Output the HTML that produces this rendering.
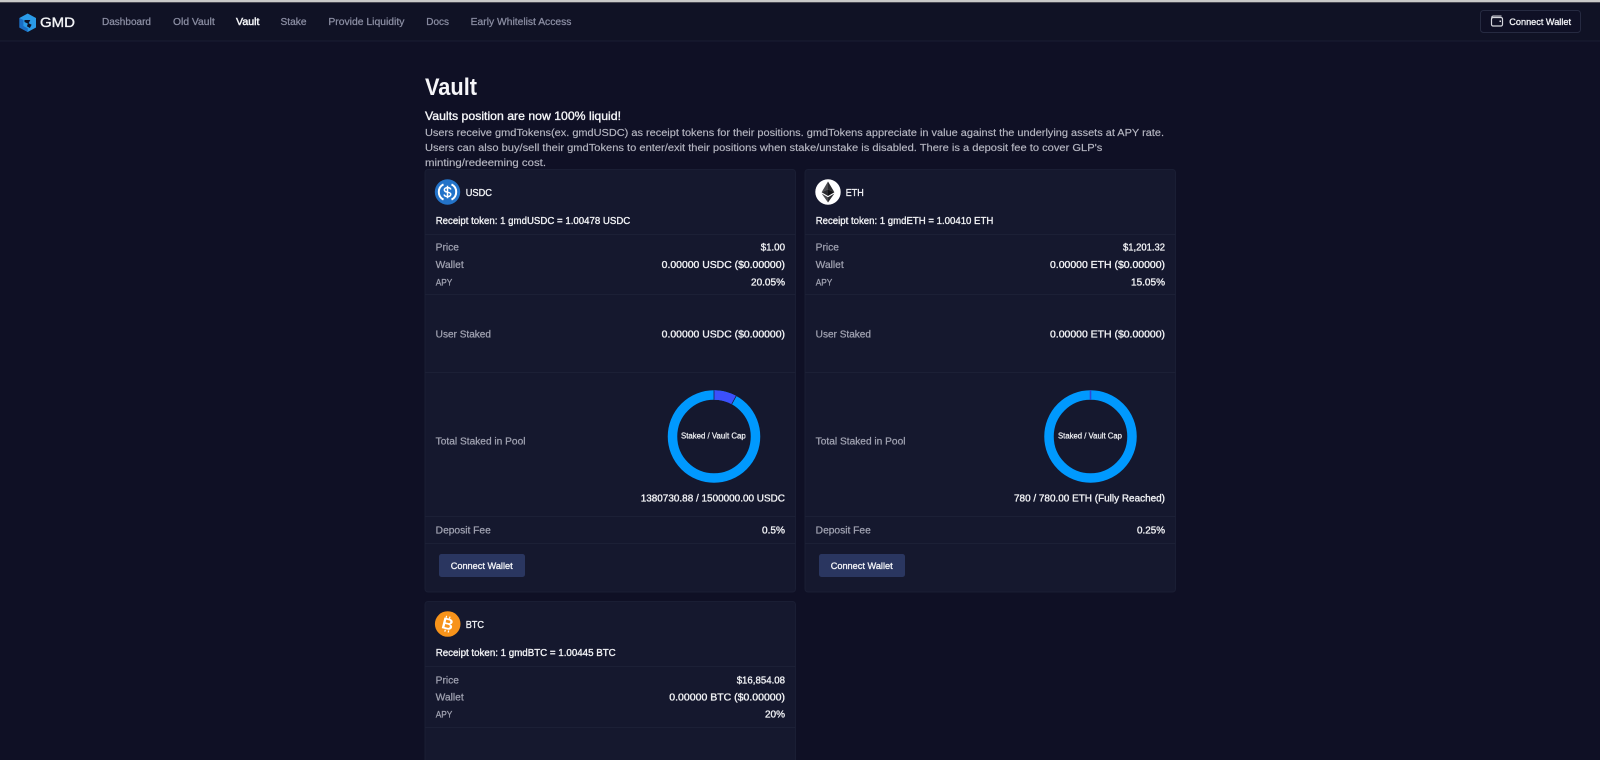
<!DOCTYPE html>
<html><head><meta charset="utf-8"><title>Vault</title>
<style>
html,body{margin:0;padding:0;width:1600px;height:760px;overflow:hidden;background:#0f1025}
svg{display:block;position:absolute;left:0;top:0;filter:blur(.3px)}
text{font-family:"Liberation Sans",sans-serif;font-size:10px}
.n{fill:#8b8ea3;stroke:#8b8ea3;stroke-width:.25}
.w{fill:#f2f3f6;stroke:#f2f3f6;stroke-width:.32}
.l{fill:#a0a2b1;stroke:#a0a2b1;stroke-width:.25}
.p{fill:#b6b7c2;stroke:#b6b7c2;stroke-width:.15}
.a{font-size:9.400px}
.line{stroke:#1c2036;stroke-width:1}
.card{fill:#15182e;stroke:#1a1e34;stroke-width:1}
</style></head><body>
<svg width="1600" height="760" viewBox="0 0 1600 760" xmlns="http://www.w3.org/2000/svg">
<rect width="1600" height="760" fill="#0f1025"/>
<rect width="1600" height="41" fill="#101225"/>
<rect width="1600" height="2" fill="#c9c9c9"/>
<rect y="2" width="1600" height="1" fill="#4a4a55"/>
<line x1="0" x2="1600" y1="41" y2="41" stroke="#1a1d33"/>

<!-- logo -->
<path d="M27.700 13.500 36 18v9.500l-8.300 4.500-8.300-4.500V18z" fill="#2a9be8"/>
<path d="M19.400 18l4 2v6l4.300 2.300v3.700l-8.300-4.500z" fill="#1a6cc4"/>
<path d="M24.500 20h5.800l-1.700 3.200 3 1.500-1.700 3.300-3-1.800 1-2.600-3.400-1.600z" fill="#0f1025"/>
<text x="40" y="27" class="w" style="font-size:14px;stroke-width:.35" textLength="35" lengthAdjust="spacingAndGlyphs">GMD</text>

<!-- nav -->
<text x="102" y="25" class="n" textLength="49" lengthAdjust="spacingAndGlyphs">Dashboard</text>
<text x="173" y="25" class="n" textLength="41.700" lengthAdjust="spacingAndGlyphs">Old Vault</text>
<text x="236" y="25" class="w" style="stroke-width:.45" textLength="23.500" lengthAdjust="spacingAndGlyphs">Vault</text>
<text x="280.500" y="25" class="n" textLength="26" lengthAdjust="spacingAndGlyphs">Stake</text>
<text x="328.400" y="25" class="n" textLength="76" lengthAdjust="spacingAndGlyphs">Provide Liquidity</text>
<text x="426.300" y="25" class="n" textLength="22.700" lengthAdjust="spacingAndGlyphs">Docs</text>
<text x="470.700" y="25" class="n" textLength="100.700" lengthAdjust="spacingAndGlyphs">Early Whitelist Access</text>

<!-- connect wallet -->
<rect x="1480.500" y="10.500" width="100" height="22" rx="3" fill="#0f1025" stroke="#262a41"/>
<path d="M1493 16h8.500M1491.700 19v-1.300q0-1.700 1.700-1.700" fill="none" stroke="#d4d5dc" stroke-width="1"/>
<rect x="1491.500" y="17.500" width="11" height="8.500" rx="1.500" fill="none" stroke="#d4d5dc" stroke-width="1.200"/>
<rect x="1499.500" y="20.500" width="1.500" height="1.500" fill="#d4d5dc"/>
<text x="1509.300" y="25" class="w" style="font-size:9.500px" textLength="61.700" lengthAdjust="spacingAndGlyphs">Connect Wallet</text>

<!-- header -->
<text x="425" y="95" style="font-size:24px;font-weight:700;fill:#f6f6f9" textLength="52" lengthAdjust="spacingAndGlyphs">Vault</text>
<text x="425" y="120" style="font-size:12px;fill:#f4f5f8;stroke:#f4f5f8;stroke-width:.35" textLength="196" lengthAdjust="spacingAndGlyphs">Vaults position are now 100% liquid!</text>
<text x="425" y="136" class="p" textLength="739" lengthAdjust="spacingAndGlyphs">Users receive gmdTokens(ex. gmdUSDC) as receipt tokens for their positions. gmdTokens appreciate in value against the underlying assets at APY rate.</text>
<text x="425" y="151" class="p" textLength="677.300" lengthAdjust="spacingAndGlyphs">Users can also buy/sell their gmdTokens to enter/exit their positions when stake/unstake is disabled. There is a deposit fee to cover GLP's</text>
<text x="425" y="166" class="p" textLength="121" lengthAdjust="spacingAndGlyphs">minting/redeeming cost.</text>

<!-- CARD USDC -->
<rect class="card" x="425" y="169.500" width="370.500" height="422.500" rx="3"/>
<circle cx="447.500" cy="192" r="12.700" fill="#2373c9"/>
<path d="M443.500 184.400a8.500 8.500 0 0 0 0 15.200M451.500 184.400a8.500 8.500 0 0 1 0 15.200" fill="none" stroke="#fff" stroke-width="2"/>
<path d="M450.800 189.500c-.3-1.300-1.700-1.900-3.300-1.900-1.900 0-3.200.9-3.200 2.300 0 3.200 6.500 1.400 6.500 4.400 0 1.400-1.400 2.300-3.300 2.300-1.800 0-3.100-.7-3.400-2.100M447.500 185.700v12.600" fill="none" stroke="#fff" stroke-width="1.500"/>
<text x="465.700" y="196" class="w" textLength="26.300" lengthAdjust="spacingAndGlyphs">USDC</text>
<text x="435.700" y="224" class="w" textLength="194.600" lengthAdjust="spacingAndGlyphs">Receipt token: 1 gmdUSDC = 1.00478 USDC</text>
<line class="line" x1="425" x2="795.500" y1="234.500" y2="234.500"/>
<text x="435.700" y="250.700" class="l" textLength="23.300" lengthAdjust="spacingAndGlyphs">Price</text>
<text x="760.700" y="250.700" class="w" textLength="24.300" lengthAdjust="spacingAndGlyphs">$1.00</text>
<text x="435.700" y="268" class="l" textLength="28" lengthAdjust="spacingAndGlyphs">Wallet</text>
<text x="661.700" y="268" class="w" textLength="123.300" lengthAdjust="spacingAndGlyphs">0.00000 USDC ($0.00000)</text>
<text x="435.700" y="285.700" class="l a" textLength="16.600" lengthAdjust="spacingAndGlyphs">APY</text>
<text x="751" y="285.700" class="w" textLength="34" lengthAdjust="spacingAndGlyphs">20.05%</text>
<line class="line" x1="425" x2="795.500" y1="294.500" y2="294.500"/>
<text x="435.700" y="337.400" class="l" textLength="55.300" lengthAdjust="spacingAndGlyphs">User Staked</text>
<text x="661.700" y="337.400" class="w" textLength="123.300" lengthAdjust="spacingAndGlyphs">0.00000 USDC ($0.00000)</text>
<line class="line" x1="425" x2="795.500" y1="372.500" y2="372.500"/>
<text x="435.700" y="444.700" class="l" textLength="89.800" lengthAdjust="spacingAndGlyphs">Total Staked in Pool</text>
<circle cx="714" cy="436.500" r="41.500" fill="none" stroke="#0099fe" stroke-width="9.500"/>
<path d="M714 395a41.500 41.500 0 0 1 19.900 5.100" fill="none" stroke="#3c50fb" stroke-width="9.500"/>
<path d="M714 390.200v9.500M736.200 395.900l-4.500 8.300" stroke="#15182e" stroke-width=".7"/>
<text x="681" y="438.300" class="w" style="font-size:8px;stroke-width:.22" textLength="64.700" lengthAdjust="spacingAndGlyphs">Staked / Vault Cap</text>
<text x="640.700" y="501.700" class="w" textLength="144.300" lengthAdjust="spacingAndGlyphs">1380730.88 / 1500000.00 USDC</text>
<line class="line" x1="425" x2="795.500" y1="516.500" y2="516.500"/>
<text x="435.700" y="533.700" class="l" textLength="55.100" lengthAdjust="spacingAndGlyphs">Deposit Fee</text>
<text x="762" y="533.700" class="w" textLength="23" lengthAdjust="spacingAndGlyphs">0.5%</text>
<line class="line" x1="425" x2="795.500" y1="543.500" y2="543.500"/>
<rect x="439" y="554" width="86" height="23" rx="2.500" fill="#2a3660"/>
<text x="450.700" y="569" class="w" style="font-size:9.500px" textLength="62" lengthAdjust="spacingAndGlyphs">Connect Wallet</text>

<!-- CARD ETH -->
<rect class="card" x="805" y="169.500" width="370.500" height="422.500" rx="3"/>
<circle cx="828" cy="192" r="12.700" fill="#fff"/>
<path d="M828 181.500l-6.400 10.700 6.400-2.800z" fill="#4b4b4f"/>
<path d="M828 181.500l6.400 10.700-6.400-2.800z" fill="#2a2a2e"/>
<path d="M821.600 192.200l6.400 3.800v-6.600z" fill="#2a2a2e"/>
<path d="M834.400 192.200l-6.400 3.800v-6.600z" fill="#111114"/>
<path d="M821.600 193.500l6.400 9v-5.200z" fill="#4b4b4f"/>
<path d="M834.400 193.500l-6.400 9v-5.200z" fill="#2a2a2e"/>
<text x="845.700" y="196" class="w" textLength="18" lengthAdjust="spacingAndGlyphs">ETH</text>
<text x="815.700" y="224" class="w" textLength="177.600" lengthAdjust="spacingAndGlyphs">Receipt token: 1 gmdETH = 1.00410 ETH</text>
<line class="line" x1="805" x2="1175.500" y1="234.500" y2="234.500"/>
<text x="815.700" y="250.700" class="l" textLength="23.300" lengthAdjust="spacingAndGlyphs">Price</text>
<text x="1123" y="250.700" class="w" textLength="42" lengthAdjust="spacingAndGlyphs">$1,201.32</text>
<text x="815.700" y="268" class="l" textLength="28" lengthAdjust="spacingAndGlyphs">Wallet</text>
<text x="1050" y="268" class="w" textLength="115" lengthAdjust="spacingAndGlyphs">0.00000 ETH ($0.00000)</text>
<text x="815.700" y="285.700" class="l a" textLength="16.600" lengthAdjust="spacingAndGlyphs">APY</text>
<text x="1131" y="285.700" class="w" textLength="34" lengthAdjust="spacingAndGlyphs">15.05%</text>
<line class="line" x1="805" x2="1175.500" y1="294.500" y2="294.500"/>
<text x="815.700" y="337.400" class="l" textLength="55.300" lengthAdjust="spacingAndGlyphs">User Staked</text>
<text x="1050" y="337.400" class="w" textLength="115" lengthAdjust="spacingAndGlyphs">0.00000 ETH ($0.00000)</text>
<line class="line" x1="805" x2="1175.500" y1="372.500" y2="372.500"/>
<text x="815.700" y="444.700" class="l" textLength="89.800" lengthAdjust="spacingAndGlyphs">Total Staked in Pool</text>
<circle cx="1090.500" cy="436.500" r="41.500" fill="none" stroke="#0099fe" stroke-width="9.500"/>
<path d="M1090.500 390.200v9.500" stroke="#2f48d8" stroke-width="1.600"/>
<text x="1058" y="438.300" class="w" style="font-size:8px;stroke-width:.22" textLength="64" lengthAdjust="spacingAndGlyphs">Staked / Vault Cap</text>
<text x="1014" y="501.700" class="w" textLength="151" lengthAdjust="spacingAndGlyphs">780 / 780.00 ETH (Fully Reached)</text>
<line class="line" x1="805" x2="1175.500" y1="516.500" y2="516.500"/>
<text x="815.700" y="533.700" class="l" textLength="55.100" lengthAdjust="spacingAndGlyphs">Deposit Fee</text>
<text x="1137" y="533.700" class="w" textLength="28" lengthAdjust="spacingAndGlyphs">0.25%</text>
<line class="line" x1="805" x2="1175.500" y1="543.500" y2="543.500"/>
<rect x="819" y="554" width="86" height="23" rx="2.500" fill="#2a3660"/>
<text x="830.700" y="569" class="w" style="font-size:9.500px" textLength="62" lengthAdjust="spacingAndGlyphs">Connect Wallet</text>

<!-- CARD BTC -->
<rect class="card" x="425" y="601.500" width="370.500" height="170" rx="3"/>
<circle cx="447.700" cy="624" r="12.800" fill="#f7931a"/>
<text x="447.700" y="629.500" text-anchor="middle" transform="rotate(14 447.700 624)" style="font-size:16px;font-weight:700;fill:#fff">B</text>
<path d="M446.600 615.800l-.5 2M450 616.600l-.5 2M445.300 629.700l-.5 2M448.700 630.500l-.5 2" stroke="#fff" stroke-width="1.200"/>
<text x="465.700" y="628" class="w" textLength="18.300" lengthAdjust="spacingAndGlyphs">BTC</text>
<text x="435.700" y="656" class="w" textLength="180" lengthAdjust="spacingAndGlyphs">Receipt token: 1 gmdBTC = 1.00445 BTC</text>
<line class="line" x1="425" x2="795.500" y1="666.500" y2="666.500"/>
<text x="435.700" y="683.700" class="l" textLength="23.300" lengthAdjust="spacingAndGlyphs">Price</text>
<text x="736.700" y="683.700" class="w" textLength="48.300" lengthAdjust="spacingAndGlyphs">$16,854.08</text>
<text x="435.700" y="700.400" class="l" textLength="28" lengthAdjust="spacingAndGlyphs">Wallet</text>
<text x="669.300" y="700.400" class="w" textLength="115.700" lengthAdjust="spacingAndGlyphs">0.00000 BTC ($0.00000)</text>
<text x="435.700" y="717.700" class="l a" textLength="16.600" lengthAdjust="spacingAndGlyphs">APY</text>
<text x="765" y="717.700" class="w" textLength="20" lengthAdjust="spacingAndGlyphs">20%</text>
<line class="line" x1="425" x2="795.500" y1="727.500" y2="727.500"/>
</svg>
</body></html>
